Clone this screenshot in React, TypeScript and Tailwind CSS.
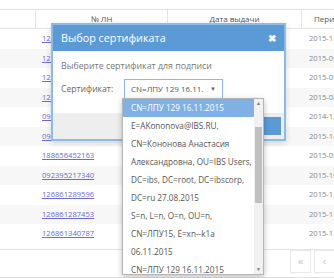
import React from "react";

const rows = [
  { id: "126861352201", a: "2015-11-16", b: "2015-11-16" },
  { id: "126861337114", a: "2015-09-21", b: "2015-09-21" },
  { id: "126861330905", a: "2015-09-02", b: "2015-09-02" },
  { id: "126861329112", a: "2015-08-28", b: "2015-08-28" },
  { id: "092395219011", a: "2014-12-03", b: "2014-12-03" },
  { id: "092395218154", a: "2015-10-12", b: "2015-10-12" },
  { id: "188656452163", a: "2015-09-14", b: "2015-09-14" },
  { id: "092395217340", a: "2015-10-05", b: "2015-10-05" },
  { id: "126861289596", a: "2015-11-02", b: "2015-11-02" },
  { id: "126861287453", a: "2015-11-05", b: "2015-11-05" },
  { id: "126861340787", a: "2015-11-09", b: "2015-11-09" },
];

// certificate subjects, wrapped as the list shows them
const options = [
  ["CN=ЛПУ 129 16.11.2015"],
  [
    "E=AKononova@IBS.RU,",
    "CN=Кононова Анастасия",
    "Александровна, OU=IBS Users,",
    "DC=ibs, DC=root, DC=ibscorp,",
    "DC=ru 27.08.2015",
  ],
  ["S=n, L=n, O=n, OU=n,", "CN=ЛПУ15, E=xn--k1a", "06.11.2015"],
  ["CN=ЛПУ 129 16.11.2015"],
];

export default function App() {
  return (
    <div
      className="relative w-[334px] h-[278px] overflow-hidden bg-white text-[#555]"
      style={{ fontFamily: '"Open Sans", "Liberation Sans", sans-serif' }}
    >
      <div className="pt-[9px]">
        <div className="border-t border-[#e3e3e3]">
          <div className="flex h-[19px] border-b border-[#e3e3e3] text-[8px] text-[#555]">
            <div className="w-[36px] shrink-0 border-r border-[#e3e3e3]" />
            <div className="w-[132px] shrink-0 border-r border-[#e3e3e3] flex items-center justify-center">
              № ЛН
            </div>
            <div className="w-[134px] shrink-0 border-r border-[#e3e3e3] flex items-center justify-center">
              Дата выдачи
            </div>
            <div className="flex-1 flex items-center pl-[12px] whitespace-nowrap overflow-hidden">Период</div>
          </div>
          {rows.map((r, i) => (
            <div
              key={i}
              className={`flex h-[19.5px] items-center text-[7.6px] whitespace-nowrap ${
                i % 2 === 1 ? "bg-[#f7f7f7]" : "bg-white"
              }`}
            >
              <div className="w-[36px] shrink-0" />
              <div className="w-[132px] shrink-0 pl-[6px]">
                <span className="text-[#6b6bd2] underline">{r.id}</span>
              </div>
              <div className="w-[134px] shrink-0 text-center text-[#888]">{r.a}</div>
              <div className="flex-1 pl-[7px] text-[#888] overflow-hidden">{r.b}</div>
            </div>
          ))}
        </div>
        <div className="border-t border-[#e3e3e3] mt-[5px] h-[28px] flex justify-end items-start pt-[0px] gap-[3px]">
          <div className="w-[21px] h-[23px] border border-[#e8e8e8] flex items-center justify-center text-[#c4c4c4] text-[11px]">
            «
          </div>
          <div className="w-[21px] h-[23px] border border-[#e8e8e8] flex items-center justify-center text-[#c4c4c4] text-[11px] -mr-[1px]">
            ‹
          </div>
        </div>
        <div className="h-[3px] bg-[#e0e0e0]" />
      </div>

      {/* modal */}
      <div className="absolute left-[51px] top-[23px] w-[235px] h-[118px] border-2 border-[#8dbbe6] bg-white shadow-[0_2px_6px_rgba(0,0,0,0.15)] flex flex-col">
        <div className="h-[26px] bg-[#5c9ad6] flex items-center justify-between pl-[8px] pr-[8px] text-white">
          <span className="text-[10.8px]">Выбор сертификата</span>
          <span className="text-[10px] font-bold">✖</span>
        </div>
        <div className="flex-1 px-[8px] pt-[9px]">
          <div className="text-[8.8px] text-[#777]">Выберите сертификат для подписи</div>
          <div className="flex items-center mt-[6px]">
            <span className="w-[63px] text-[8.6px] text-[#666]">Сертификат:</span>
            <div className="w-[99px] h-[20px] border border-[#8db9e8] flex items-center justify-between pl-[6px] pr-[6px] text-[8px] text-[#555]">
              <span className="whitespace-nowrap">CN=ЛПУ 129 16.11.</span>
              <span className="text-[6px] text-[#666]">▼</span>
            </div>
          </div>
        </div>
        <div className="h-[26px] bg-[#eeeeee] flex items-center justify-end pr-[3px]">
          <div className="w-[70px] h-[18px] bg-[#5c9ad6]" />
        </div>
      </div>

      {/* open select list */}
      <div className="absolute left-[122px] top-[98px] w-[142px] h-[177px] bg-white border border-[#b5b5b5] shadow-[0_2px_6px_rgba(0,0,0,0.25)] flex">
        <div className="flex-1 text-[8.2px] text-[#555] overflow-hidden">
          {options.map((lines, i) => (
            <div key={i} className={`pl-[8px] ${i === 0 ? "bg-[#7fb1e4] text-white" : ""}`}>
              {lines.map((l, j) => (
                <div key={j} className="h-[18px] leading-[18px] whitespace-nowrap">
                  {l}
                </div>
              ))}
            </div>
          ))}
        </div>
        <div className="w-[9px] bg-[#f1f1f1] flex flex-col items-center justify-between">
          <div>
            <div className="h-[9px] text-[5px] text-[#777] leading-[9px] text-center">▲</div>
            <div className="w-[7px] h-[76px] bg-[#c1c1c1] mt-[19px]" />
          </div>
          <div className="h-[9px] text-[5px] text-[#777] leading-[9px]">▼</div>
        </div>
      </div>
    </div>
  );
}
